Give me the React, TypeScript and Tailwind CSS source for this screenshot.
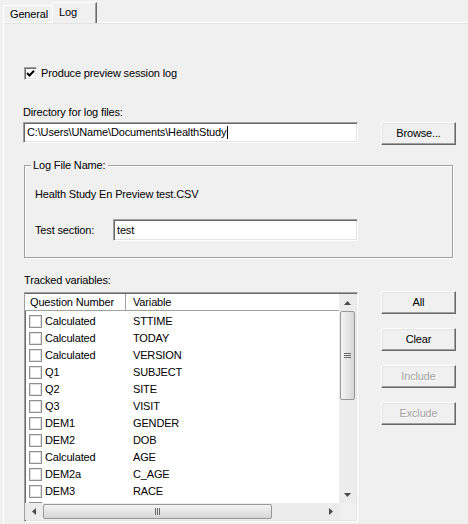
import React from "react";

const sunken =
  "border border-t-[#a0a0a0] border-l-[#a0a0a0] border-b-white border-r-white shadow-[inset_1px_1px_0_#696969,inset_-1px_-1px_0_#e3e3e3] bg-white";
const raised =
  "border border-t-white border-l-white border-b-[#696969] border-r-[#696969] shadow-[inset_-1px_-1px_0_#a0a0a0,inset_1px_1px_0_#e3e3e3] bg-[#f0f0f0]";

const rows: [string, string][] = [
  ["Calculated", "STTIME"],
  ["Calculated", "TODAY"],
  ["Calculated", "VERSION"],
  ["Q1", "SUBJECT"],
  ["Q2", "SITE"],
  ["Q3", "VISIT"],
  ["DEM1", "GENDER"],
  ["DEM2", "DOB"],
  ["Calculated", "AGE"],
  ["DEM2a", "C_AGE"],
  ["DEM3", "RACE"],
  ["DEM3", "RACE_O"],
];

const Btn = ({ label, disabled }: { label: string; disabled?: boolean }) => (
  <div
    className={`flex h-[23px] w-[75px] items-center justify-center ${raised} ${
      disabled ? "text-[#a0a0a0] [text-shadow:1px_1px_0_#fff]" : "text-black"
    }`}
  >
    {label}
  </div>
);

const Arrow = ({ dir }: { dir: "up" | "down" | "left" | "right" }) => {
  const pts = {
    up: "0,4 7,4 3.5,0",
    down: "0,0 7,0 3.5,4",
    left: "4,0 4,7 0,3.5",
    right: "0,0 0,7 4,3.5",
  }[dir];
  const vertical = dir === "up" || dir === "down";
  return (
    <svg width={vertical ? 7 : 4} height={vertical ? 4 : 7} viewBox={vertical ? "0 0 7 4" : "0 0 4 7"}>
      <polygon points={pts} fill="#4a4a4a" />
    </svg>
  );
};

export default function App() {
  return (
    <div
      className="relative h-[524px] w-[468px] overflow-hidden bg-[#f0f0f0] text-[11px] leading-[13px] tracking-[-0.15px] text-black"
      style={{ fontFamily: '"Liberation Sans", Arial, sans-serif' }}
    >
      {/* tabs */}
      <div className="flex h-[22px] items-end pl-[3px]">
        <div className="flex h-[17px] w-[49px] items-center border-l border-t border-white pl-[6px]">
          General
        </div>
        <div className="relative top-[1px] z-10 h-[21px] w-[45px] border-l border-r border-t border-l-white border-t-white border-r-[#696969] bg-[#f0f0f0] pl-[6px] pt-[3px] shadow-[inset_-1px_0_0_#a0a0a0]">
          Log
        </div>
      </div>

      {/* page */}
      <div className="ml-[3px] flex h-[502px] flex-col border-l border-t border-white pl-[19px] shadow-[inset_0_1px_0_#e3e3e3]">
        <div className="mt-[44px] flex h-[13px] items-center">
          <div className={`ml-[1px] flex h-[13px] w-[13px] items-center justify-center ${sunken}`}>
            <svg width="9" height="9" viewBox="0 0 9 9">
              <path d="M1 4 L3.5 6.5 L8 1.8" stroke="#000" strokeWidth="2" fill="none" />
            </svg>
          </div>
          <span className="ml-[4px]">Produce preview session log</span>
        </div>

        <div className="mt-[26px] h-[13px]">Directory for log files:</div>

        <div className="mt-[3px] flex items-start">
          <div className={`relative flex h-[21px] w-[335px] items-center pl-[3px] ${sunken}`}>
            <span>C:\Users\UName\Documents\HealthStudy</span>
            <span className="ml-[1px] h-[13px] w-[1px] bg-black" />
          </div>
          <div className="ml-[23px]">
            <Btn label="Browse..." />
          </div>
        </div>

        {/* group box */}
        <div className="relative ml-[1px] mt-[20px] h-[93px] w-[429px] border border-[#a0a0a0] shadow-[inset_1px_1px_0_#fff,1px_1px_0_#fff]">
          <span className="absolute -top-[7px] left-[6px] bg-[#f0f0f0] px-[2px]">Log File Name:</span>
          <div className="ml-[10px] mt-[22px] h-[13px]">Health Study En Preview test.CSV</div>
          <div className="mt-[18px] flex items-center">
            <span className="ml-[10px] w-[78px]">Test section:</span>
            <div className={`flex h-[22px] w-[245px] items-center pl-[3px] ${sunken}`}>test</div>
          </div>
        </div>

        <div className="mt-[16px] h-[13px] pl-[1px]">Tracked variables:</div>

        <div className="mt-[5px] flex items-start">
          {/* list */}
          <div className={`ml-[1px] flex h-[230px] w-[334px] flex-col ${sunken} p-[1px] pl-[0px]`}>
            <div className="flex min-h-0 flex-1">
              <div className="flex min-w-0 flex-1 flex-col overflow-hidden">
                <div className="flex h-[17px] shrink-0 items-center border-b border-[#a0a0a0] bg-white">
                  <div className="flex h-full w-[101px] items-center border-r border-[#a0a0a0] pl-[5px] shadow-[1px_0_0_#fff]">
                    Question Number
                  </div>
                  <div className="pl-[7px]">Variable</div>
                </div>
                <div className="pt-[2px]">
                  {rows.map(([q, v], i) => (
                    <div key={i} className="flex h-[17px] items-center">
                      <div className="flex w-[108px] items-center pl-[4px]">
                        <div className="h-[13px] w-[13px] border border-[#8f8f8f] bg-white shadow-[inset_0_0_0_1px_#e0e0e0]" />
                        <span className="ml-[3px]">{q}</span>
                      </div>
                      <span>{v}</span>
                    </div>
                  ))}
                </div>
              </div>
              {/* vertical scrollbar */}
              <div className="flex w-[17px] flex-col bg-[#ececec]">
                <div className="flex h-[17px] items-center justify-center">
                  <Arrow dir="up" />
                </div>
                <div className="mx-[1px] h-[89px] rounded-[2px] border border-[#979797] bg-linear-to-r from-[#f4f4f4] to-[#d6d6d6] flex items-center justify-center">
                  <div className="flex flex-col gap-[1px]">
                    <div className="h-[1px] w-[7px] bg-[#6a6a6a]" />
                    <div className="h-[1px] w-[7px] bg-[#6a6a6a]" />
                    <div className="h-[1px] w-[7px] bg-[#6a6a6a]" />
                  </div>
                </div>
                <div className="flex-1" />
                <div className="flex h-[17px] items-center justify-center">
                  <Arrow dir="down" />
                </div>
              </div>
            </div>
            {/* horizontal scrollbar */}
            <div className="flex h-[17px] shrink-0">
              <div className="flex flex-1 items-center bg-[#ececec]">
                <div className="flex h-full w-[17px] items-center justify-center">
                  <Arrow dir="left" />
                </div>
                <div className="ml-[1px] flex h-[15px] w-[229px] items-center justify-center rounded-[2px] border border-[#979797] bg-linear-to-b from-[#f4f4f4] to-[#d6d6d6]">
                  <div className="flex gap-[1px]">
                    <div className="h-[7px] w-[1px] bg-[#6a6a6a]" />
                    <div className="h-[7px] w-[1px] bg-[#6a6a6a]" />
                    <div className="h-[7px] w-[1px] bg-[#6a6a6a]" />
                  </div>
                </div>
                <div className="flex-1" />
                <div className="flex h-full w-[17px] items-center justify-center">
                  <Arrow dir="right" />
                </div>
              </div>
              <div className="w-[17px] bg-[#f0f0f0]" />
            </div>
          </div>

          {/* buttons */}
          <div className="ml-[23px] -mt-[1px] flex flex-col gap-[14px]">
            <Btn label="All" />
            <Btn label="Clear" />
            <Btn label="Include" disabled />
            <Btn label="Exclude" disabled />
          </div>
        </div>
      </div>
    </div>
  );
}
